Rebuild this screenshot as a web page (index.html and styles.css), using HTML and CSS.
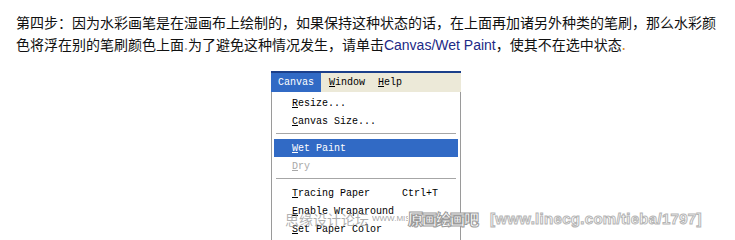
FILE: index.html
```html
<!DOCTYPE html>
<html lang="zh">
<head>
<meta charset="utf-8">
<link rel="stylesheet" href="styles.css">
</head>
<body>
<div class="page">
  <p class="intro">第四步：因为水彩画笔是在湿画布上绘制的，如果保持这种状态的话，在上面再加诸另外种类的笔刷，那么水彩颜色将浮在别的笔刷颜色上面<span class="dot">.</span>为了避免这种情况发生，请单击<span class="link">Canvas/Wet Paint</span>，使其不在选中状态<span class="dot orange">.</span></p>
  <div class="shot">
    <div class="menu">
      <div class="menubar">
        <span class="top active">Canvas</span>
        <span class="top"><u>W</u>indow</span>
        <span class="top"><u>H</u>elp</span>
      </div>
      <div class="drop">
        <div class="item"><span><u>R</u>esize...</span></div>
        <div class="item"><span><u>C</u>anvas Size...</span></div>
        <div class="sep"></div>
        <div class="item hl"><span><u>W</u>et Paint</span></div>
        <div class="item dis"><span><u>D</u>ry</span></div>
        <div class="sep"></div>
        <div class="item"><span><u>T</u>racing Paper</span><span class="key">Ctrl+T</span></div>
        <div class="item"><span><u>E</u>nable Wraparound</span></div>
        <div class="item"><span><u>S</u>et Paper Color</span></div>
      </div>
    </div>
    <div class="wm">
      <span class="wm1">思缘设计论坛</span><span class="wm2">WWW.MISSYUAN.COM</span><span class="wm3">原画绘画吧</span><span class="wm4">[www.linecg.com/tieba/1797]</span>
    </div>
  </div>
</div>
</body>
</html>
```
FILE: styles.css
```css
html, body {
  margin: 0;
  padding: 0;
  background: #ffffff;
}
.page {
  width: 735px;
  height: 240px;
  overflow: hidden;
}
.intro {
  margin: 0;
  padding: 11px 16px 0 16px;
  font-family: "Noto Sans CJK SC", "Liberation Sans", sans-serif;
  font-size: 14px;
  line-height: 22px;
  color: #111;
}
.link {
  font-family: "Liberation Sans", sans-serif;
  color: #1c2a86;
}
.dot {
  color: #999;
}
.dot.orange {
  color: #d98a1a;
}
.shot {
  position: relative;
  display: flex;
  justify-content: center;
  padding-right: 3px;
  margin-top: 15px;
}
.menu {
  width: 190px;
  font-family: "Liberation Mono", "DejaVu Sans Mono", monospace;
  font-size: 10px;
  color: #000;
  border-top: 2px solid #1b3f8a;
}
.menubar {
  display: flex;
  height: 19px;
  background: #ece9d8;
  align-items: stretch;
}
.top {
  display: flex;
  align-items: center;
  padding: 0 6px;
  margin-right: 1px;
}
.top.active {
  background: #316ac5;
  color: #fff;
  padding: 0 7px 0 7px;
  margin-right: 2px;
}
.drop {
  background: #fff;
  border-left: 1px solid #9a9a9a;
  border-right: 1px solid #9a9a9a;
  border-bottom: 1px solid #9a9a9a;
  padding: 2px;
  height: 144px;
}
.item {
  height: 18px;
  display: flex;
  align-items: center;
  justify-content: space-between;
  padding: 0 18px 0 18px;
  white-space: pre;
}
.item u {
  text-decoration: underline;
  text-underline-offset: 1px;
}
.item.hl {
  background: #316ac5;
  color: #fff;
}
.item.dis {
  color: #a8a8a8;
}
.key {
  padding-right: 2px;
}
.sep {
  height: 1px;
  margin: 3px 2px 4px 2px;
  background: #a6a6a6;
  border-bottom: 1px solid #fff;
}
.wm {
  position: absolute;
  left: 285px;
  top: 137px;
  display: flex;
  align-items: center;
  white-space: nowrap;
  pointer-events: none;
}
.wm1 {
  font-family: "Noto Sans CJK SC", sans-serif;
  font-size: 14px;
  color: rgba(150, 150, 150, 0.75);
}
.wm2 {
  font-family: "Liberation Sans", sans-serif;
  font-size: 8px;
  color: rgba(140, 140, 140, 0.8);
  margin-left: 3px;
  width: 36px;
  overflow: hidden;
}
.wm3 {
  font-family: "Noto Sans CJK SC", sans-serif;
  font-size: 15px;
  font-weight: 900;
  color: #fff;
  -webkit-text-stroke: 1px #9a9a9a;
  letter-spacing: -1px;
}
.wm4 {
  font-family: "Liberation Sans", sans-serif;
  font-size: 15px;
  font-weight: bold;
  color: #fff;
  -webkit-text-stroke: 1px #b5b5b5;
  margin-left: 12px;
  letter-spacing: 0.3px;
}
```
